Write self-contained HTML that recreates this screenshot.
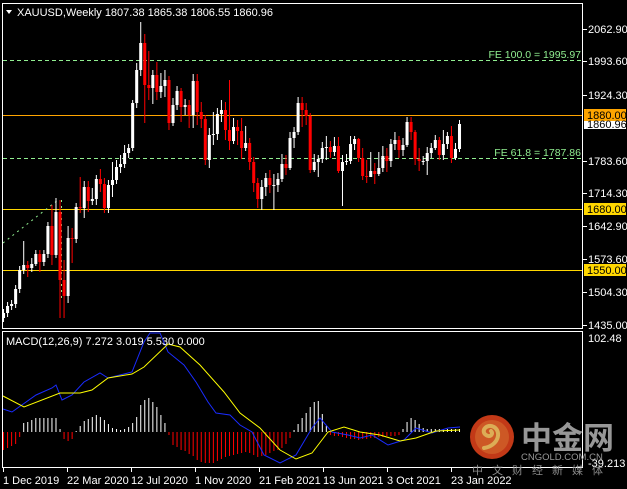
<!DOCTYPE html>
<html><head><meta charset="utf-8"><style>
html,body{margin:0;padding:0;background:#000;width:627px;height:489px;overflow:hidden}
svg{display:block;font-family:"Liberation Sans","Noto Sans CJK SC",sans-serif;font-size:11px}
</style></head><body>
<svg width="627" height="489" xmlns="http://www.w3.org/2000/svg">
<rect width="627" height="489" fill="#000"/>
<line x1="3" y1="60.5" x2="582" y2="60.5" stroke="#90EE90" stroke-dasharray="4,3"/>
<line x1="3" y1="158.5" x2="582" y2="158.5" stroke="#90EE90" stroke-dasharray="4,3"/>
<line x1="3" y1="115.5" x2="582" y2="115.5" stroke="#FFA500"/>
<line x1="3" y1="209.5" x2="582" y2="209.5" stroke="#FFD700"/>
<line x1="3" y1="270.5" x2="582" y2="270.5" stroke="#FFD700"/>
<line x1="3" y1="243" x2="58" y2="200" stroke="#90EE90" stroke-dasharray="2,4"/>
<line x1="61.5" y1="200" x2="61.5" y2="302" stroke="#90EE90" stroke-dasharray="2,4"/>
<g transform="scale(1.0088,1)">
<path fill="#fff" d="M3,309h1v13h-1z M2,313h3v5h-3z M7,302h1v15h-1z M6,306h3v7h-3z M11,300h1v10h-1z M10,304h3v2h-3z M15,285h1v23h-1z M14,289h3v15h-3z M19,266h1v27h-1z M18,270h3v19h-3z M23,241h1v33h-1z M22,265h3v5h-3z M31,258h1v14h-1z M30,264h3v4h-3z M35,250h1v16h-1z M34,254h3v10h-3z M43,250h1v16h-1z M42,254h3v8h-3z M47,222h1v36h-1z M46,226h3v28h-3z M55,198h1v60h-1z M54,212h3v43h-3z M67,226h1v77h-1z M66,238h3v58h-3z M75,203h1v40h-1z M74,207h3v32h-3z M83,181h1v37h-1z M82,187h3v21h-3z M91,188h1v17h-1z M90,199h3v2h-3z M95,175h1v30h-1z M94,179h3v20h-3z M107,180h1v33h-1z M106,185h3v23h-3z M111,162h1v35h-1z M110,180h3v5h-3z M115,160h1v24h-1z M114,167h3v13h-3z M119,155h1v18h-1z M118,164h3v3h-3z M123,145h1v23h-1z M122,153h3v11h-3z M127,144h1v14h-1z M126,148h3v5h-3z M131,100h1v51h-1z M130,103h3v45h-3z M135,63h1v45h-1z M134,70h3v33h-3z M139,22h1v54h-1z M138,43h3v27h-3z M151,70h1v34h-1z M150,75h3v13h-3z M159,73h1v25h-1z M158,86h3v6h-3z M163,70h1v27h-1z M162,80h3v6h-3z M171,98h1v28h-1z M170,105h3v18h-3z M175,86h1v24h-1z M174,91h3v14h-3z M183,99h1v16h-1z M182,105h3v2h-3z M191,74h1v54h-1z M190,81h3v34h-3z M207,128h1v40h-1z M206,135h3v25h-3z M211,112h1v33h-1z M210,134h3v1h-3z M215,108h1v32h-1z M214,114h3v20h-3z M219,100h1v22h-1z M218,110h3v4h-3z M231,118h1v26h-1z M230,127h3v14h-3z M243,126h1v25h-1z M242,143h3v5h-3z M259,180h1v30h-1z M258,187h3v12h-3z M263,173h1v23h-1z M262,178h3v9h-3z M271,174h1v36h-1z M270,185h3v1h-3z M275,173h1v19h-1z M274,179h3v6h-3z M279,154h1v28h-1z M278,164h3v15h-3z M287,132h1v38h-1z M286,138h3v30h-3z M291,127h1v21h-1z M290,132h3v6h-3z M295,97h1v38h-1z M294,103h3v29h-3z M311,154h1v18h-1z M310,162h3v8h-3z M315,155h1v22h-1z M314,159h3v3h-3z M319,142h1v21h-1z M318,148h3v11h-3z M323,136h1v24h-1z M322,147h3v1h-3z M331,137h1v19h-1z M330,146h3v6h-3z M339,155h1v51h-1z M338,162h3v9h-3z M343,154h1v11h-1z M342,161h3v1h-3z M347,136h1v28h-1z M346,144h3v17h-3z M351,136h1v14h-1z M350,139h3v5h-3z M367,152h1v25h-1z M366,171h3v6h-3z M375,152h1v24h-1z M374,168h3v6h-3z M379,146h1v26h-1z M378,156h3v12h-3z M387,139h1v28h-1z M386,144h3v17h-3z M391,132h1v18h-1z M390,140h3v4h-3z M399,138h1v18h-1z M398,145h3v5h-3z M403,117h1v30h-1z M402,122h3v23h-3z M419,156h1v9h-1z M418,161h3v1h-3z M423,147h1v28h-1z M422,153h3v8h-3z M427,143h1v15h-1z M426,148h3v5h-3z M431,135h1v15h-1z M430,140h3v8h-3z M439,130h1v30h-1z M438,144h3v11h-3z M443,132h1v17h-1z M442,136h3v8h-3z M451,143h1v17h-1z M450,149h3v9h-3z M455,120h1v32h-1z M454,124h3v25h-3z"/>
<path fill="#f00" d="M27,261h1v16h-1z M26,265h3v3h-3z M39,250h1v22h-1z M38,254h3v8h-3z M51,205h1v60h-1z M50,226h3v29h-3z M59,200h1v118h-1z M58,212h3v68h-3z M63,260h1v58h-1z M62,280h3v16h-3z M71,228h1v35h-1z M70,238h3v1h-3z M79,177h1v36h-1z M78,207h3v1h-3z M87,181h1v31h-1z M86,187h3v14h-3z M99,169h1v23h-1z M98,179h3v5h-3z M103,178h1v35h-1z M102,184h3v24h-3z M143,34h1v89h-1z M142,43h3v42h-3z M147,51h1v49h-1z M146,85h3v3h-3z M155,62h1v38h-1z M154,75h3v17h-3z M167,76h1v54h-1z M166,80h3v43h-3z M179,88h1v34h-1z M178,91h3v16h-3z M187,100h1v28h-1z M186,105h3v10h-3z M195,74h1v51h-1z M194,81h3v31h-3z M199,102h1v26h-1z M198,112h3v7h-3z M203,115h1v50h-1z M202,119h3v41h-3z M223,102h1v38h-1z M222,110h3v20h-3z M227,80h1v70h-1z M226,130h3v11h-3z M235,120h1v25h-1z M234,127h3v4h-3z M239,118h1v41h-1z M238,131h3v17h-3z M247,138h1v32h-1z M246,143h3v19h-3z M251,157h1v35h-1z M250,162h3v21h-3z M255,178h1v30h-1z M254,183h3v16h-3z M267,170h1v23h-1z M266,178h3v7h-3z M283,155h1v20h-1z M282,164h3v4h-3z M299,97h1v30h-1z M298,103h3v7h-3z M303,103h1v22h-1z M302,110h3v6h-3z M307,113h1v60h-1z M306,116h3v54h-3z M327,141h1v17h-1z M326,147h3v5h-3z M335,137h1v36h-1z M334,146h3v25h-3z M355,138h1v24h-1z M354,139h3v19h-3z M359,148h1v32h-1z M358,158h3v18h-3z M363,160h1v23h-1z M362,176h3v1h-3z M371,163h1v21h-1z M370,171h3v3h-3z M383,148h1v24h-1z M382,156h3v5h-3z M395,136h1v22h-1z M394,140h3v10h-3z M407,117h1v23h-1z M406,122h3v10h-3z M411,130h1v35h-1z M410,132h3v27h-3z M415,148h1v23h-1z M414,159h3v2h-3z M435,137h1v23h-1z M434,140h3v15h-3z M447,126h1v37h-1z M446,136h3v22h-3z"/>
<path stroke="#fff" fill="none" d="M23.5 432v-9M27.5 432v-10M31.5 432v-12M35.5 432v-14M39.5 432v-14M43.5 432v-14M47.5 432v-14M51.5 432v-14M55.5 432v-14M59.5 432v-3M75.5 432v-1M79.5 432v-6M83.5 432v-11M87.5 432v-13M91.5 432v-15M95.5 432v-17M99.5 432v-15M103.5 432v-12M107.5 432v-8M111.5 432v-4M115.5 432v-3M119.5 432v-2M123.5 432v-3M127.5 432v-5M131.5 432v-9M135.5 432v-15M139.5 432v-27M143.5 432v-32M147.5 432v-34M151.5 432v-30M155.5 432v-25M159.5 432v-17M163.5 432v-9M291.5 432v-2M295.5 432v-8M299.5 432v-14M303.5 432v-19M307.5 432v-25M311.5 432v-30M315.5 432v-31M319.5 432v-18M323.5 432v-6M399.5 432v-3M403.5 432v-10M407.5 432v-14M411.5 432v-12M415.5 432v-8M419.5 432v-4M423.5 432v-3M427.5 432v-3M431.5 432v-3M435.5 432v-3M439.5 432v-3M443.5 432v-3M447.5 432v-3M451.5 432v-3M455.5 432v-3"/>
<path stroke="#ff0000" fill="none" d="M3.5 432v18M7.5 432v16M11.5 432v14M15.5 432v12M19.5 432v5M63.5 432v7M67.5 432v9M71.5 432v7M167.5 432v3M171.5 432v13M175.5 432v15M179.5 432v18M183.5 432v19M187.5 432v22M191.5 432v24M195.5 432v28M199.5 432v30M203.5 432v31M207.5 432v31M211.5 432v31M215.5 432v29M219.5 432v27M223.5 432v25M227.5 432v24M231.5 432v23M235.5 432v22M239.5 432v21M243.5 432v20M247.5 432v21M251.5 432v23M255.5 432v25M259.5 432v24M263.5 432v23M267.5 432v21M271.5 432v19M275.5 432v18M279.5 432v16M283.5 432v12M287.5 432v6M327.5 432v3M331.5 432v4M335.5 432v4M339.5 432v5M343.5 432v6M347.5 432v7M351.5 432v7M355.5 432v8M359.5 432v7M363.5 432v7M367.5 432v6M371.5 432v6M375.5 432v5M379.5 432v5M383.5 432v4M387.5 432v4M391.5 432v4M395.5 432v3"/>
</g>
<polyline fill="none" stroke="#1a2cff" points="3,409 12,412 36,395 52,388 56,385 62,400 72,395 84,382 100,373 108,378 132,372 144,342 150,333 160,333 168,352 184,365 196,382 208,402 216,413 230,415 240,425 252,432 264,455 280,463 296,455 312,428 320,418 332,432 348,435 360,438 372,435 388,445 404,440 416,428 432,433 448,428 460,427"/>
<polyline fill="none" stroke="#ffff00" points="3,396 24,407 60,393 80,393 92,390 108,378 132,374 144,367 168,344 180,347 200,365 224,392 240,413 260,428 280,450 296,459 312,453 328,432 344,427 360,432 380,435 400,441 416,438 436,431 460,430"/>
<rect x="2.5" y="3.5" width="580" height="325" fill="none" stroke="#fff"/>
<rect x="2.5" y="331.5" width="580" height="136" fill="none" stroke="#fff"/>
<text x="581" y="58" fill="#90EE90" text-anchor="end" font-size="10.5">FE 100.0 = 1995.97</text>
<text x="581" y="156" fill="#90EE90" text-anchor="end" font-size="10.5">FE 61.8 = 1787.86</text>
<polygon points="6,10 12,10 9,14" fill="#fff"/>
<text x="17" y="16" fill="#fff">XAUUSD,Weekly  1807.38 1865.38 1806.55 1860.96</text>
<text x="6" y="345" fill="#fff">MACD(12,26,9) 7.272 3.019 5.530 0.000</text>
<g stroke="#fff">
<line x1="583" y1="29.5" x2="587" y2="29.5"/><line x1="583" y1="61.5" x2="587" y2="61.5"/>
<line x1="583" y1="95.5" x2="587" y2="95.5"/><line x1="583" y1="161.5" x2="587" y2="161.5"/>
<line x1="583" y1="193.5" x2="587" y2="193.5"/><line x1="583" y1="226.5" x2="587" y2="226.5"/>
<line x1="583" y1="259.5" x2="587" y2="259.5"/><line x1="583" y1="292.5" x2="587" y2="292.5"/>
<line x1="583" y1="325.5" x2="587" y2="325.5"/>
</g>
<g fill="#fff">
<text x="588" y="33">2062.90</text><text x="588" y="65">1993.60</text>
<text x="588" y="99">1924.30</text><text x="588" y="165">1783.60</text>
<text x="588" y="197">1714.30</text><text x="588" y="230">1642.90</text>
<text x="588" y="263">1573.60</text><text x="588" y="296">1504.30</text>
<text x="588" y="329">1435.00</text>
<text x="588" y="342">102.48</text>
<text x="588" y="467">-39.213</text>
</g>
<rect x="584" y="109" width="42" height="12" fill="#FFA500"/>
<text x="587" y="119" fill="#000">1880.00</text>
<rect x="584" y="121" width="42" height="8" fill="#fff"/>
<text x="587" y="128" fill="#000">1860.96</text>
<rect x="584" y="203" width="42" height="12" fill="#FFD700"/>
<text x="587" y="213" fill="#000">1680.00</text>
<rect x="584" y="264" width="42" height="12" fill="#FFD700"/>
<text x="587" y="274" fill="#000">1550.00</text>
<g stroke="#fff">
<line x1="3.5" y1="467" x2="3.5" y2="472"/><line x1="67.5" y1="467" x2="67.5" y2="472"/>
<line x1="131.5" y1="467" x2="131.5" y2="472"/><line x1="195.5" y1="467" x2="195.5" y2="472"/>
<line x1="259.5" y1="467" x2="259.5" y2="472"/><line x1="323.5" y1="467" x2="323.5" y2="472"/>
<line x1="387.5" y1="467" x2="387.5" y2="472"/><line x1="451.5" y1="467" x2="451.5" y2="472"/>
</g>
<g fill="#fff">
<text x="3" y="484">1 Dec 2019</text><text x="67" y="484">22 Mar 2020</text>
<text x="131" y="484">12 Jul 2020</text><text x="195" y="484">1 Nov 2020</text>
<text x="259" y="484">21 Feb 2021</text><text x="323" y="484">13 Jun 2021</text>
<text x="387" y="484">3 Oct 2021</text><text x="451" y="484">23 Jan 2022</text>
</g>
<g opacity="0.9">
<circle cx="492" cy="437" r="22" fill="#D8401A"/>
<circle cx="492" cy="437" r="17" fill="#E4622A"/>
<path d="M484 448 C498 446 502 432 494 427 C487 423 480 431 486 435 C490 438 494 434 491 431" fill="none" stroke="#F4C060" stroke-width="4" stroke-linecap="round"/>
<text x="521" y="449" fill="#a8a8a8" font-size="31" font-weight="bold" font-family="Noto Sans CJK SC, sans-serif">中金网</text>
<text x="521" y="460" fill="#a8a8a8" font-size="9.5">CNGOLD.COM.CN</text>
<text x="472" y="474" fill="#999" font-size="11" letter-spacing="9" font-family="Noto Sans CJK SC, sans-serif">中文财经新媒体</text>
</g>
</svg>
</body></html>
